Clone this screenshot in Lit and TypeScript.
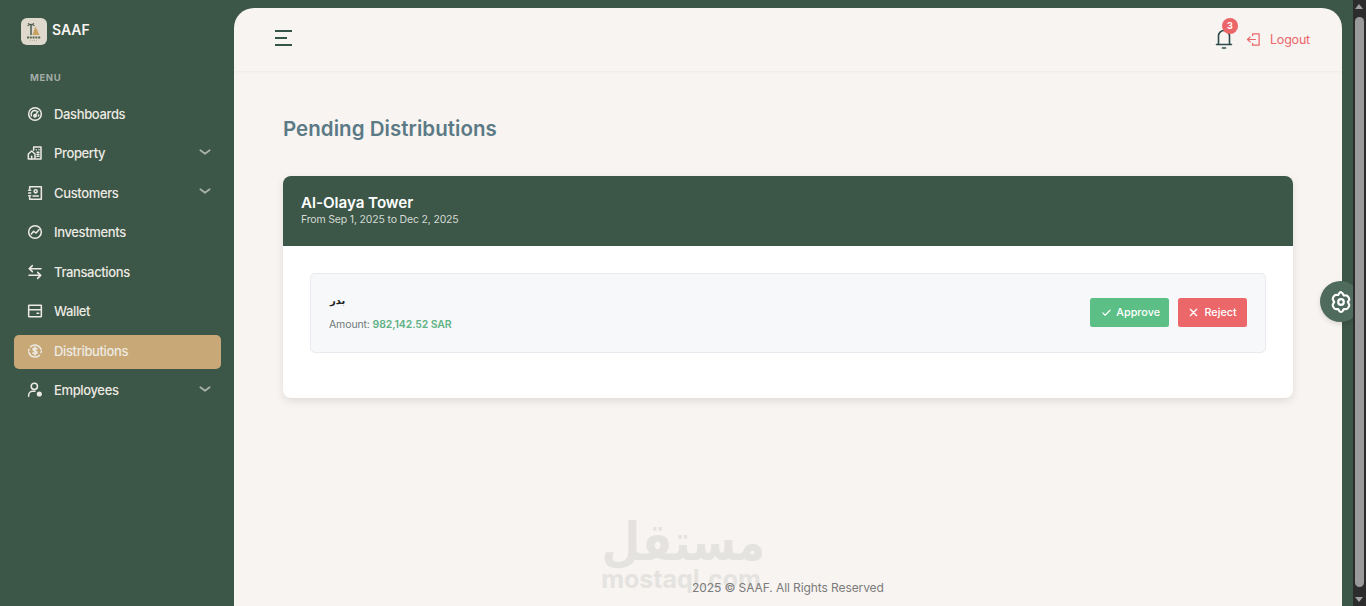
import { LitElement, html, css, svg } from "lit";
import { customElement } from "lit/decorators.js";

const icon = (body: unknown, size = 16) => html`<svg class="ic" width=${size} height=${size} viewBox="0 0 24 24" fill="none" stroke="currentColor" stroke-width="2.300" stroke-linecap="round" stroke-linejoin="round">${body}</svg>`;

const icons: Record<string, unknown> = {
  dash: svg`<circle cx="12" cy="12" r="9.500"/><path d="M6.500 14.500a5.500 5.500 0 0 1 7.500-7"/><path d="M12.500 14 16.500 8"/><circle cx="12" cy="14.500" r="1.800"/><path d="M17.500 13.500a5.500 5.500 0 0 1-.5 1.500"/>`,
  prop: svg`<path d="M10 8V3h11v18H2v-7.500L7 9l5 4.500V21"/><path d="M7 21v-4"/><path d="M14 7h.01M18 7h.01M15 11h3M15 14h3M15 17h3"/>`,
  cust: svg`<path d="M4 6V2.500h17.500v19H4V18"/><path d="M2.500 8h3M2.500 12h3M2.500 16h3"/><circle cx="13" cy="9.500" r="2.300"/><path d="M9 16.500h8"/>`,
  inv: svg`<circle cx="12" cy="12" r="9.500"/><path d="M6.500 15l3.500-4 3.500 2.500 4.500-5"/>`,
  trans: svg`<path d="M8 2.500 3.500 7 8 11.500"/><path d="M4 7h17"/><path d="m16 12.500 4.500 4.500-4.500 4.500"/><path d="M20 17H3"/>`,
  wallet: svg`<rect x="2.500" y="3.500" width="19" height="17" rx=".5"/><path d="M2.500 10h19"/><path d="M15 15.500h2.500"/>`,
  dist: svg`<path d="M5.500 5.500a9.500 9.500 0 0 1 15.500 4"/><path d="M18.500 18.500a9.500 9.500 0 0 1-15.500-4"/><path d="M2.500 12c0-1 .2-2 .5-2.500M21.500 12c0 1-.2 2-.5 2.500"/><path d="M15 9c-.6-.8-1.700-1.200-3-1.200-1.700 0-3 .9-3 2.100 0 2.700 6 1.300 6 4.100 0 1.200-1.300 2.100-3 2.100-1.300 0-2.400-.4-3-1.200"/><path d="M12 6v12"/>`,
  emp: svg`<circle cx="11" cy="6.500" r="4.700"/><path d="M2.500 21.500v-1.500A6 6 0 0 1 8.500 14H12"/><circle cx="18.500" cy="18" r="2.700" fill="currentColor"/>`,
};

const nav = [
  { k: "dash", t: "Dashboards" },
  { k: "prop", t: "Property", c: 1 },
  { k: "cust", t: "Customers", c: 1 },
  { k: "inv", t: "Investments" },
  { k: "trans", t: "Transactions" },
  { k: "wallet", t: "Wallet" },
  { k: "dist", t: "Distributions", a: 1 },
  { k: "emp", t: "Employees", c: 1 },
];

@customElement("app-root")
export class AppRoot extends LitElement {
  static styles = css`
    :host { display: block; height: 606px; overflow: hidden; font-family: "Inter", "Liberation Sans", sans-serif; }
    * { box-sizing: border-box; }
    .page { display: flex; height: 606px; background: #3c5647; position: relative; overflow: hidden; }
    .side { width: 234px; flex: none; padding: 18px 13px 0 14px; color: #edeae3; }
    .brand { display: flex; align-items: center; gap: 5px; padding-left: 7px; height: 27px; }
    .logo { width: 26px; height: 27px; border-radius: 6px; background: #dfd9cd; display: flex; align-items: center; justify-content: center; }
    .brand b { font-size: 14px; font-weight: 600; color: #f8f5f0; position: relative; top: -2px; letter-spacing: -.05px; }
    .menu { font-size: 9.500px; font-weight: 700; letter-spacing: .6px; color: #a3aca6; margin: 27px 0 0 16px; height: 12px; line-height: 12px; }
    .list { margin-top: 13.500px; display: flex; flex-direction: column; gap: 5.500px; }
    .item { display: flex; align-items: center; height: 34px; border-radius: 5px; padding: 0 9px 1.500px 13px; font-size: 13px; font-weight: 500; letter-spacing: -.36px; }
    .item .ic { flex: none; margin-right: 11px; }
    .item span { flex: 1; }
    .item.active { background: #c8a876; }
    .chev { color: #a6b1aa; margin-bottom: 3px; }
    .main { flex: none; width: 1108px; margin-top: 8px; height: 598px; background: #f8f4f1; border-radius: 20px 20px 0 0; display: flex; flex-direction: column; position: relative; }
    .top { height: 64px; flex: none; display: flex; align-items: center; padding: 0 32px 4px 41px; border-bottom: 1px solid #f0edea; box-shadow: 0 1px 2px rgba(0,0,0,.02); }
    .burger { display: flex; flex-direction: column; gap: 5px; width: 17px; }
    .burger i { display: block; height: 2px; background: #34544a; }
    .burger i:nth-child(2) { width: 12px; }
    .tools { margin-left: auto; display: flex; align-items: center; }
    .bell { position: relative; color: #2c4a4a; width: 20px; height: 22px; display: flex; margin-right: 12px; }
    .badge { position: absolute; left: 8px; top: -9px; width: 16px; height: 16px; border-radius: 50%; background: #ea6669; color: #fff; font-size: 9px; font-weight: 700; display: flex; align-items: center; justify-content: center; }
    .logout { display: flex; align-items: center; color: #ea6669; font-size: 12.500px; gap: 9px; letter-spacing: -.2px; margin-top: 3px; }
    .content { padding: 44px 49px 0; flex: 1; }
    h1 { margin: 0; font-size: 20.500px; line-height: 26px; font-weight: 600; letter-spacing: .04px; color: #5b7a86; }
    .card { margin-top: 34px; background: #fff; border-radius: 8px; overflow: hidden; box-shadow: 0 3px 8px rgba(0,0,0,.1); height: 222px; }
    .head { background: #3c5647; height: 70px; padding: 18px 18px 0; color: #fff; }
    .head h2 { margin: 0; font-size: 15.200px; line-height: 18px; font-weight: 600; letter-spacing: -.05px; }
    .head p { margin: 1px 0 0; font-size: 10.500px; line-height: 14px; color: #d4dad5; letter-spacing: -.17px; }
    .body { padding: 27px; }
    .row { height: 80px; background: #f7f8fa; border: 1px solid #e7eaee; border-radius: 5px; display: flex; align-items: center; justify-content: space-between; padding: 0 18px; }
    .name { font-size: 10px; font-weight: 700; color: #1e1e1e; font-family: "DejaVu Sans", sans-serif; line-height: 14px; padding-left: 1px; }
    .amt { margin-top: 10px; font-size: 10.500px; line-height: 14px; color: #6e7a78; letter-spacing: -.12px; }
    .amt b { color: #5fb285; font-weight: 600; }
    .acts { display: flex; gap: 9px; margin-bottom: 1px; }
    .btn { height: 29px; border-radius: 2.500px; color: #fff; font-size: 10.800px; font-weight: 500; display: flex; align-items: center; padding: 0 9px 0 11px; gap: 4.500px; }
    .ok { background: #5cc086; width: 79px; }
    .no { background: #ec676a; width: 69px; gap: 6.500px; }
    .foot { position: absolute; left: 458px; top: 572px; font-size: 12px; line-height: 16px; color: #7b7b7b; letter-spacing: -.09px; }
    .mark { position: absolute; left: 365px; top: 505px; width: 160px; color: #e4e3e0; text-align: center; line-height: 1; }
    .mark .ar { display: block; font-family: "DejaVu Sans", sans-serif; font-weight: 700; font-size: 52px; height: 58px; line-height: 58px; white-space: nowrap; transform: scaleX(.86); transform-origin: center; margin: 0 -10px; }
    .mark .en { display: block; font-size: 25px; font-weight: 700; height: 26px; line-height: 26px; white-space: nowrap; margin: -5px -10px 0; padding-left: 4px; }
    .gear { position: absolute; left: 1320px; top: 281px; width: 41px; height: 41px; border-radius: 50%; background: #4f6b5d; color: #fff; display: flex; align-items: center; justify-content: center; box-shadow: 0 2px 5px rgba(0,0,0,.12); }
    .gutter { flex: 1; }
    .sb { position: absolute; right: 0; top: 0; width: 13px; height: 606px; background: #2c2c2c; z-index: 2; }
    .sb .up { position: absolute; left: 2px; top: 4px; border: 4.500px solid transparent; border-top: 0; border-bottom: 5px solid #a0a0a0; }
    .sb .dn { position: absolute; left: 2px; bottom: 4px; border: 4.500px solid transparent; border-bottom: 0; border-top: 5px solid #a0a0a0; }
    .sb .th { position: absolute; left: 2px; top: 17px; width: 9px; height: 570px; background: #9a9a9a; border-radius: 5px; }
  `;

  render() {
    return html`<div class="page">
      <aside class="side">
        <div class="brand">
          <div class="logo">
            <svg width="24" height="24" viewBox="0 0 24 24"><path d="M13.500 6.500l4 8.500h-7z" fill="#c8a060"/><path d="M9 5v10" stroke="#4a5a50" stroke-width="1.500"/><path d="M5.500 6c1.500-2 5.500-2 7 0M6 3.500c1.500 1 4.500 1 6 0" stroke="#4a5a50" fill="none" stroke-width="1.200"/><path d="M5 17.500h14" stroke="#5b6650" stroke-width="2" stroke-dasharray="2 .8"/><path d="M8 20.500h8" stroke="#b8b2a4" stroke-width="1.200" stroke-dasharray="1 1"/></svg>
          </div>
          <b>SAAF</b>
        </div>
        <div class="menu">MENU</div>
        <div class="list">
          ${nav.map((n) => html`<div class="item ${n.a ? "active" : ""}">
            ${icon(icons[n.k])}<span>${n.t}</span>
            ${n.c ? html`<svg class="chev" width="14" height="14" viewBox="0 0 24 24" fill="none" stroke="currentColor" stroke-width="3" stroke-linecap="round" stroke-linejoin="round"><path d="m4 9 8 6 8-6"/></svg>` : ""}
          </div>`)}
        </div>
      </aside>
      <main class="main">
        <header class="top">
          <div class="burger"><i></i><i></i><i></i></div>
          <div class="tools">
            <div class="bell">
              <svg width="20" height="22" viewBox="0 0 20 22" fill="none" stroke="currentColor" stroke-width="1.600" stroke-linecap="round" stroke-linejoin="round"><path d="M2.500 17.500h15M4.500 17.500V9a5.500 5.500 0 0 1 11 0v8.500"/><path d="M8.500 21h3"/></svg>
              <div class="badge">3</div>
            </div>
            <div class="logout">
              <svg width="15" height="15" viewBox="0 0 16 16" fill="none" stroke="currentColor" stroke-width="1.300" stroke-linecap="round" stroke-linejoin="round"><path d="M7 4V2h7v12H7v-2"/><path d="M10 8H1.500M4.500 5.500 1.500 8l3 2.500"/></svg>
              <span>Logout</span>
            </div>
          </div>
        </header>
        <div class="content">
          <h1>Pending Distributions</h1>
          <section class="card">
            <div class="head">
              <h2>Al-Olaya Tower</h2>
              <p>From Sep 1, 2025 to Dec 2, 2025</p>
            </div>
            <div class="body">
              <div class="row">
                <div>
                  <div class="name">بدر</div>
                  <div class="amt">Amount: <b>982,142.52 SAR</b></div>
                </div>
                <div class="acts">
                  <div class="btn ok"><svg width="11" height="11" viewBox="0 0 12 12" fill="none" stroke="currentColor" stroke-width="1.300" stroke-linecap="round" stroke-linejoin="round"><path d="m2 6.500 2.500 2.500L10 3.500"/></svg>Approve</div>
                  <div class="btn no"><svg width="9" height="9" viewBox="0 0 10 10" fill="none" stroke="currentColor" stroke-width="1.500" stroke-linecap="round"><path d="m1.500 1.500 7 7m0-7-7 7"/></svg>Reject</div>
                </div>
              </div>
            </div>
          </section>
        </div>
        <div class="mark"><span class="ar">مستقل</span><span class="en">mostaql.com</span></div>
        <div class="foot">2025 © SAAF. All Rights Reserved</div>
      </main>
      <div class="gutter"></div>
      <div class="gear">
        <svg width="24" height="24" viewBox="0 0 24 24" fill="none" stroke="currentColor" stroke-width="2.200" stroke-linejoin="round"><path d="M12 2.500c1 0 1.500.5 2 1.500l.8 1.500 1.800-.1c1.100-.1 1.800.2 2.400 1.100l1 1.700c.5.9.4 1.600-.2 2.500L18.800 12l1 1.800c.6.900.7 1.600.2 2.500l-1 1.700c-.6.900-1.300 1.200-2.400 1.100l-1.800-.1-.8 1.500c-.5 1-1 1.500-2 1.500s-1.500-.5-2-1.500l-.8-1.500-1.800.1c-1.100.1-1.800-.2-2.400-1.100l-1-1.700c-.5-.9-.4-1.600.2-2.500L5.200 12l-1-1.800c-.6-.9-.7-1.600-.2-2.500l1-1.700c.6-.9 1.300-1.200 2.400-1.100l1.800.1.800-1.500c.5-1 1-1.500 2-1.500z"/><circle cx="12" cy="12" r="2.800"/></svg>
      </div>
      <div class="sb"><div class="up"></div><div class="th"></div><div class="dn"></div></div>
    </div>`;
  }
}
